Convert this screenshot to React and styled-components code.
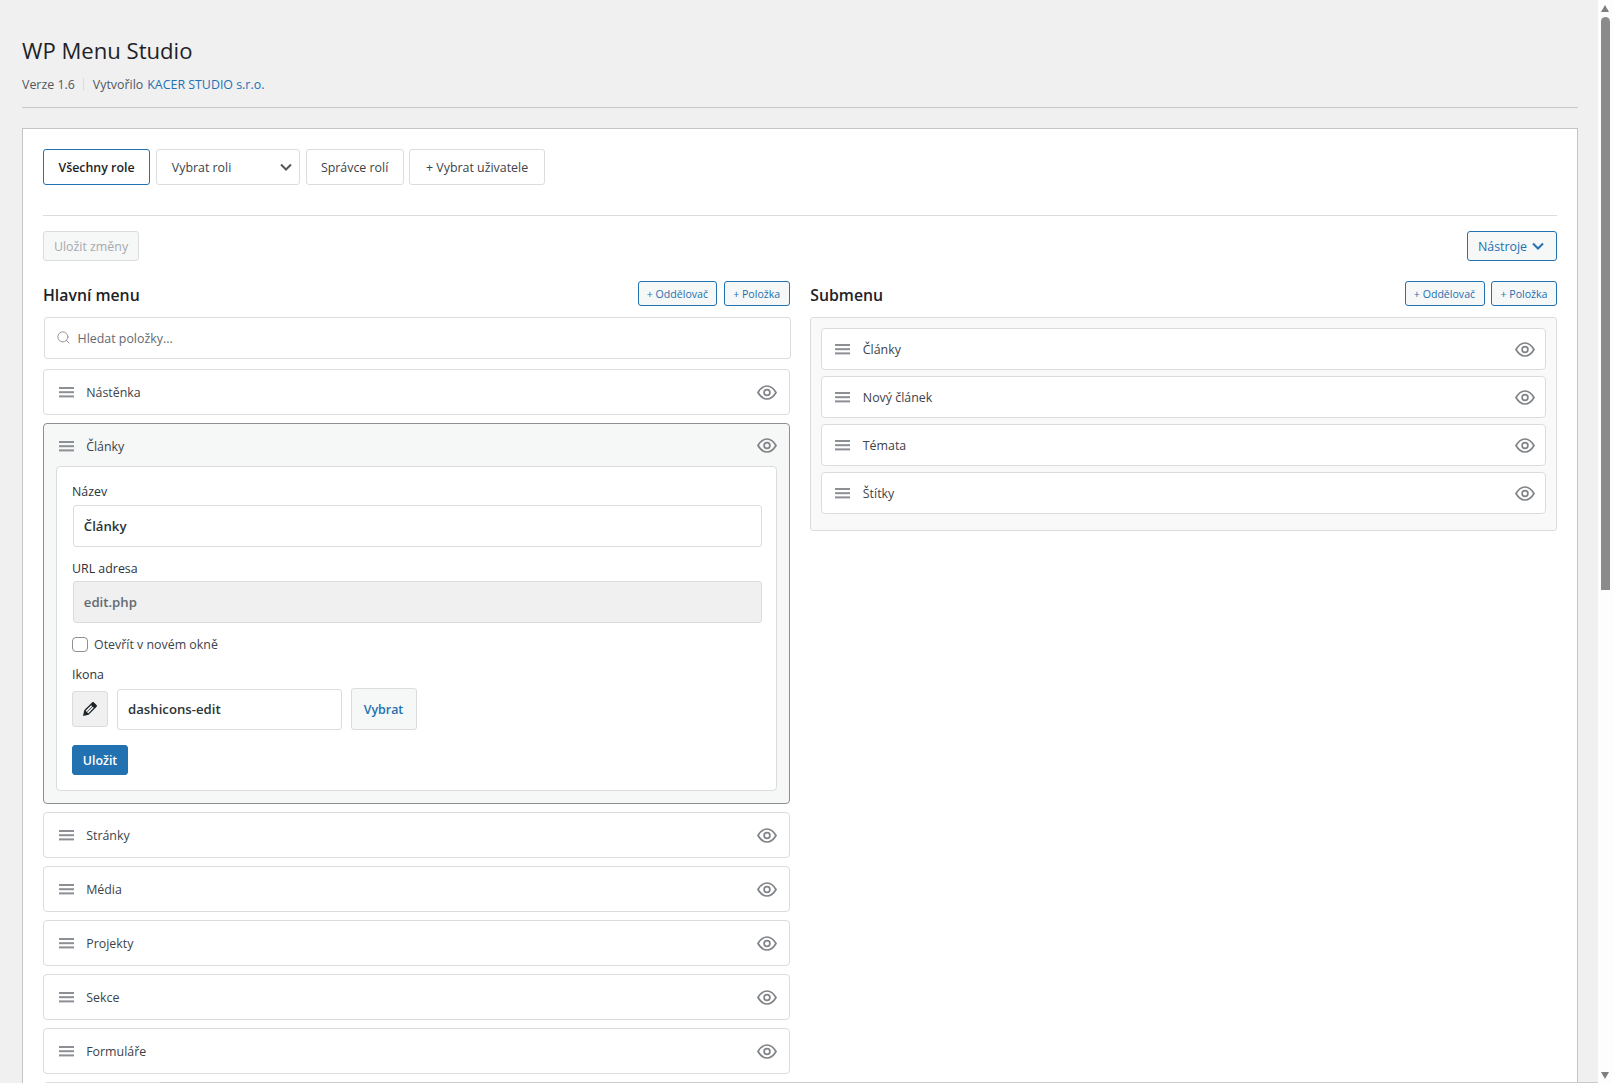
import styled, { createGlobalStyle } from "styled-components";
import { Search } from "lucide-react";

const GlobalStyle = createGlobalStyle`
    html, body {
        margin: 0;
        height: 100%;
        overflow: hidden;
    }
    body {
        font-family: "Open Sans", "Noto Sans", "Liberation Sans", sans-serif;
        font-size: 12.4px;
        color: #3c434a;
        background: #f0f0f1;
    }
    * { box-sizing: border-box; }
`;

const Screen = styled.div`
    position: relative;
    display: flex;
    width: 1613px;
    height: 1083px;
    overflow: hidden;
`;

const Main = styled.main`
    flex: 1;
    min-width: 0;
    height: 100%;
    overflow: hidden;
    padding: 35px 20px 0 22px;
    background: #f0f0f1;
`;

const Edge = styled.div`
    position: absolute;
    left: 160px;
    right: 15px;
    bottom: 0;
    height: 1px;
    background: #c9c9d0;
`;

const ScrollTrack = styled.div`
    position: relative;
    flex: 0 0 15px;
    height: 100%;
    background: #fdfdfd;
`;

const ScrollThumb = styled.div`
    position: absolute;
    top: 17px;
    left: 3px;
    width: 9px;
    height: 573px;
    border-radius: 5px 5px 0 0;
    background: #8b8b8b;
`;

const ScrollArrow = styled.div`
    position: absolute;
    left: 3px;
    ${props => props.$down ? "bottom: 4px;" : "top: 5px;"}
    width: 0;
    height: 0;
    border-left: 4.5px solid transparent;
    border-right: 4.5px solid transparent;
    ${props => props.$down ? "border-top: 7px solid #7f7f7f;" : "border-bottom: 7px solid #7f7f7f;"}
`;

const Title = styled.h1`
    margin: 0;
    font-size: 22.1px;
    font-weight: 400;
    line-height: 30px;
    color: #1d2327;
`;

const Meta = styled.div`
    display: flex;
    align-items: center;
    height: 20px;
    margin-top: 9px;
    color: #50575e;
`;

const MetaDivider = styled.span`
    width: 1px;
    height: 13px;
    margin: 0 8.5px;
    background: #dcdcde;
`;

const Link = styled.a`
    margin-left: 4px;
    color: #2271b1;
    text-decoration: none;
`;

const HeaderRule = styled.hr`
    height: 1px;
    margin: 13px 0 20px;
    border: 0;
    background: #c8c9cb;
`;

const Card = styled.section`
    padding: 20px;
    background: #fff;
    border: 1px solid #c3c4c7;
`;

const RoleBar = styled.div`
    display: flex;
    gap: 5.8px;
`;

const RoleButton = styled.button`
    display: flex;
    align-items: center;
    justify-content: ${props => props.$between ? "space-between" : "center"};
    width: ${props => props.$w}px;
    height: 36px;
    padding: ${props => props.$between ? "0 7px 0 15px" : "0"};
    font: inherit;
    font-weight: ${props => props.$active ? 600 : 400};
    color: ${props => props.$active ? "#1d2327" : "#3c434a"};
    background: #fff;
    border: 1px solid ${props => props.$active ? "#2271b1" : "#dcdcde"};
    border-radius: 3px;
`;

const Rule = styled.hr`
    height: 1px;
    margin: 30px 0 15px;
    border: 0;
    background: #dcdcde;
`;

const ActionBar = styled.div`
    display: flex;
    justify-content: space-between;
    height: 30px;
    margin-bottom: 20px;
`;

const SaveAll = styled.button`
    width: 96px;
    font: inherit;
    color: #a7aaad;
    background: #f6f7f7;
    border: 1px solid #dcdcde;
    border-radius: 3px;
`;

const Tools = styled.button`
    display: flex;
    align-items: center;
    justify-content: center;
    gap: 5px;
    width: 90px;
    padding: 0 2px 0 0;
    font: inherit;
    color: #2271b1;
    background: #f6f7f7;
    border: 1px solid #2271b1;
    border-radius: 3px;
`;

const Columns = styled.div`
    display: grid;
    grid-template-columns: 1fr 1fr;
    column-gap: 20.6px;
`;

const ColumnHead = styled.div`
    display: flex;
    align-items: center;
    justify-content: space-between;
    height: 25.3px;
    margin-bottom: 11px;
`;

const Heading = styled.h2`
    margin: 0;
    padding-top: 4px;
    font-size: 15.8px;
    font-weight: 600;
    line-height: 25px;
    color: #1d2327;
`;

const AddGroup = styled.div`
    display: flex;
    gap: 6.5px;
`;

const AddButton = styled.button`
    width: ${props => props.$w}px;
    height: 25.3px;
    padding: 0;
    font: inherit;
    font-size: 10.6px;
    color: #2271b1;
    background: #f6f7f7;
    border: 1px solid #2271b1;
    border-radius: 3px;
`;

const List = styled.div`
    display: flex;
    flex-direction: column;
    gap: 8.4px;
`;

const SearchBox = styled.label`
    display: flex;
    align-items: center;
    gap: 7px;
    height: 41.4px;
    margin: 0 -1px 2.2px 1px;
    padding: 0 10.5px;
    color: #8c8f94;
    background: #fff;
    border: 1px solid #dcdcde;
    border-radius: 3px;
`;

const SearchInput = styled.input`
    flex: 1;
    padding: 1px 0 0;
    font: inherit;
    color: #3c434a;
    background: none;
    border: 0;
    outline: 0;
    &::placeholder {
        color: #646970;
        opacity: 1;
    }
`;

const Row = styled.div`
    display: flex;
    align-items: center;
    gap: ${props => props.$sub ? 12.5 : 12.7}px;
    height: ${props => props.$sub ? 41.4 : 45.6}px;
    padding: ${props => props.$sub ? "1px 10px 0 13px" : "1px 11.5px 0 14.5px"};
    background: #fff;
    border: 1px solid #dcdcde;
    border-radius: 4px;
`;

const RowLabel = styled.span`
    flex: 1;
    color: #3c434a;
`;

const OpenItem = styled.div`
    height: 380.6px;
    padding: 0 12px 12px;
    background: #f6f7f7;
    border: 1px solid #8c8f94;
    border-radius: 4px;
`;

const OpenHead = styled.div`
    display: flex;
    align-items: center;
    gap: 12.7px;
    height: 42px;
    padding: 2px 0 0 2.5px;
    svg:last-child {
        margin-top: -1px;
    }
`;

const Panel = styled.div`
    padding: 15.4px 14.5px 15px 15px;
    background: #fff;
    border: 1px solid #dcdcde;
    border-radius: 4px;
`;

const FieldLabel = styled.div`
    height: 18px;
    margin-top: ${props => props.$top || 0}px;
    margin-bottom: ${props => props.$top ? 3.4 : 4.4}px;
    font-weight: 500;
    line-height: 18px;
    color: #2c3338;
`;

const TextInput = styled.input`
    display: block;
    width: ${props => props.$w ? `${props.$w}px` : "100%"};
    height: 41.6px;
    margin-left: ${props => props.$w ? 0 : 0.8}px;
    padding: 0 10px;
    font: inherit;
    font-size: 13.2px;
    font-weight: 600;
    color: ${props => props.$muted ? "#646970" : "#2c3338"};
    background: ${props => props.$muted ? "#f0f0f1" : "#fff"};
    border: 1px solid #dcdcde;
    border-radius: 3px;
    outline: 0;
`;

const CheckRow = styled.label`
    display: flex;
    align-items: center;
    gap: 6.5px;
    height: 15px;
    margin-top: 14px;
    color: #3c434a;
`;

const Check = styled.input`
    width: 15.5px;
    height: 15.5px;
    margin: 0;
    appearance: none;
    background: #fff;
    border: 1px solid #8c8f94;
    border-radius: 4px;
`;

const IconRow = styled.div`
    display: flex;
    align-items: center;
    gap: 9px;
    height: 42px;
    margin-top: 4.6px;
`;

const IconPreview = styled.div`
    display: flex;
    align-items: center;
    justify-content: center;
    width: 36px;
    height: 36px;
    background: #f0f0f1;
    border: 1px solid #dcdcde;
    border-radius: 3px;
`;

const PickButton = styled.button`
    width: 66px;
    height: 42px;
    padding: 0;
    font: inherit;
    font-weight: 600;
    color: #2271b1;
    background: #f6f7f7;
    border: 1px solid #dcdcde;
    border-radius: 3px;
`;

const SaveButton = styled.button`
    display: block;
    width: 56px;
    height: 30px;
    margin-top: 15px;
    padding: 1px 0 0;
    font: inherit;
    font-weight: 600;
    color: #fff;
    background: #2271b1;
    border: 1px solid #2271b1;
    border-radius: 3px;
`;

const SubPanel = styled.div`
    display: flex;
    flex-direction: column;
    gap: 6.6px;
    padding: 10px 10px 16.4px 10px;
    background: #f9f9f9;
    border: 1px solid #dcdcde;
    border-radius: 3px;
`;

const Bars = () => (
    <svg width="15" height="11" viewBox="0 0 15 11" fill="#8c8f94">
        <rect y="0" width="15" height="2" />
        <rect y="4.2" width="15" height="2" />
        <rect y="8.4" width="15" height="2" />
    </svg>
);

const Eye = () => (
    <svg width="20" height="15" viewBox="0 0 20 15" fill="none" stroke="#808387" strokeWidth="1.7">
        <path d="M1 7.5C3.5 3.2 6.5 1 10 1s6.500 2.200 9 6.500C16.500 11.800 13.500 14 10 14S3.500 11.800 1 7.500Z" />
        <circle cx="10" cy="7.500" r="2.900" />
    </svg>
);

const Chevron = ({ color, width = 12 }) => (
    <svg width={width} height="8" viewBox="0 0 12 8" fill="none" stroke={color} strokeWidth="2">
        <path d="M1 1.500l5 5 5-5" />
    </svg>
);

const Pencil = () => (
    <svg width="20" height="20" viewBox="0 0 20 20" fill="#1d2327">
        <path d="M13.890 3.390l2.710 2.720c.460.460.420 1.240.030 1.640l-8.010 8.020-5.560 1.160 1.160-5.580s7.600-7.630 7.990-8.030c.390-.390 1.220-.390 1.680.070zm-2.730 2.790l-5.590 5.610 1.110 1.110 5.540-5.650zm-2.970 8.230l5.580-5.600-1.070-1.080-5.590 5.600z" />
    </svg>
);

function MenuRow({ label, sub }) {
    return (
        <Row $sub={sub}>
            <Bars />
            <RowLabel>{label}</RowLabel>
            <Eye />
        </Row>
    );
}

export default function App() {
    return (
        <>
            <GlobalStyle />
            <Screen>
                <Main>
                    <Title>WP Menu Studio</Title>
                    <Meta>
                        Verze 1.6
                        <MetaDivider />
                        Vytvořilo
                        <Link href="#">KACER STUDIO s.r.o.</Link>
                    </Meta>
                    <HeaderRule />
                    <Card>
                        <RoleBar>
                            <RoleButton $w={107} $active>Všechny role</RoleButton>
                            <RoleButton $w={144} $between>
                                Vybrat roli
                                <Chevron color="#50575e" />
                            </RoleButton>
                            <RoleButton $w={98}>Správce rolí</RoleButton>
                            <RoleButton $w={135.4}>+ Vybrat uživatele</RoleButton>
                        </RoleBar>
                        <Rule />
                        <ActionBar>
                            <SaveAll disabled>Uložit změny</SaveAll>
                            <Tools>
                                Nástroje
                                <Chevron color="#2271b1" />
                            </Tools>
                        </ActionBar>
                        <Columns>
                            <div>
                                <ColumnHead>
                                    <Heading>Hlavní menu</Heading>
                                    <AddGroup>
                                        <AddButton $w={79.5}>+ Oddělovač</AddButton>
                                        <AddButton $w={66}>+ Položka</AddButton>
                                    </AddGroup>
                                </ColumnHead>
                                <List>
                                    <SearchBox>
                                        <Search size={15} strokeWidth={1.5} />
                                        <SearchInput placeholder="Hledat položky..." />
                                    </SearchBox>
                                    <MenuRow label="Nástěnka" />
                                    <OpenItem>
                                        <OpenHead>
                                            <Bars />
                                            <RowLabel>Články</RowLabel>
                                            <Eye />
                                        </OpenHead>
                                        <Panel>
                                            <FieldLabel>Název</FieldLabel>
                                            <TextInput defaultValue="Články" />
                                            <FieldLabel $top={13.2}>URL adresa</FieldLabel>
                                            <TextInput $muted readOnly defaultValue="edit.php" />
                                            <CheckRow>
                                                <Check type="checkbox" />
                                                Otevřít v novém okně
                                            </CheckRow>
                                            <FieldLabel $top={14.1}>Ikona</FieldLabel>
                                            <IconRow>
                                                <IconPreview><Pencil /></IconPreview>
                                                <TextInput $w={224.5} defaultValue="dashicons-edit" />
                                                <PickButton>Vybrat</PickButton>
                                            </IconRow>
                                            <SaveButton>Uložit</SaveButton>
                                        </Panel>
                                    </OpenItem>
                                    <MenuRow label="Stránky" />
                                    <MenuRow label="Média" />
                                    <MenuRow label="Projekty" />
                                    <MenuRow label="Sekce" />
                                    <MenuRow label="Formuláře" />
                                    <Row />
                                </List>
                            </div>
                            <div>
                                <ColumnHead>
                                    <Heading>Submenu</Heading>
                                    <AddGroup>
                                        <AddButton $w={80}>+ Oddělovač</AddButton>
                                        <AddButton $w={66}>+ Položka</AddButton>
                                    </AddGroup>
                                </ColumnHead>
                                <SubPanel>
                                    <MenuRow sub label="Články" />
                                    <MenuRow sub label="Nový článek" />
                                    <MenuRow sub label="Témata" />
                                    <MenuRow sub label="Štítky" />
                                </SubPanel>
                            </div>
                        </Columns>
                    </Card>
                </Main>
                <ScrollTrack>
                    <ScrollArrow />
                    <ScrollThumb />
                    <ScrollArrow $down />
                </ScrollTrack>
                <Edge />
            </Screen>
        </>
    );
}
